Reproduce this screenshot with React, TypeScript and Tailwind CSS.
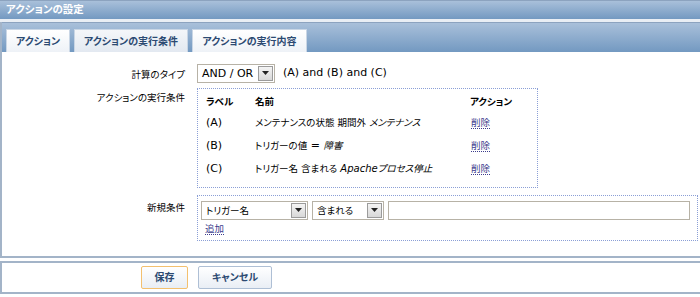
// Action settings form - condition tab of the action editor

const jp = { fontFamily: '"DejaVu Sans", "Noto Sans CJK JP", sans-serif' };

// japanese text is rendered a bit smaller than latin text in this screen
function J({ children, className = '' }: { children: React.ReactNode; className?: string }) {
    return <span className={`text-[9.5px] ${className}`}>{children}</span>;
}

type Cond = { label: string; name: React.ReactNode };

const conditions: Cond[] = [
    { label: '(A)', name: <J>メンテナンスの状態 期間外 <i>メンテナンス</i></J> },
    { label: '(B)', name: <><J>トリガーの値</J> = <J><i>障害</i></J></> },
    { label: '(C)', name: <><J>トリガー名 含まれる </J><i className="text-[10px]">Apache</i><J><i>プロセス停止</i></J></> },
];

function SelectBox({ value, width }: { value: React.ReactNode; width: string }) {
    return (
        <div className={`flex items-center h-[19px] border border-[#b7b2a6] bg-white ${width}`}>
            <span className="flex-1 pl-1 text-[11px] text-black leading-none">{value}</span>
            <span className="w-[15px] h-[15px] mr-[1px] border border-[#9b9b9b] bg-gradient-to-b from-[#f4f4f4] to-[#d8d8d8] flex items-center justify-center">
                <svg width="7" height="4" viewBox="0 0 7 4"><path d="M0 0h7L3.5 4z" fill="#222" /></svg>
            </span>
        </div>
    );
}

function TextLink({ text }: { text: string }) {
    return <span className="text-[9.5px] text-[#3b3b8c] border-b border-dotted border-[#3b3b8c] leading-[13px]">{text}</span>;
}

const tabCls = 'h-[23px] border border-b-0 border-[#c9d6e5] flex items-center justify-center font-bold text-[10px] text-[#2c4a72]';

export default function App() {
    return (
        <div className="w-[700px] h-[297px] bg-white overflow-hidden text-[11px] text-black [font-feature-settings:'palt']" style={jp}>
            {/* title bar */}
            <div className="h-[19px] border-t border-[#8ca3bf] bg-gradient-to-b from-[#a9c0da] to-[#7399c1] flex items-center pl-[6px]">
                <span className="text-white font-bold text-[10.5px]">アクションの設定</span>
            </div>
            <div className="h-[3px] bg-[#e9eef4]" />
            {/* tab panel */}
            <div className="border-l-2 border-[#a3b4c8]">
                <div className="h-[30px] border-t border-[#8ca3bf] bg-gradient-to-b from-[#a9c0da] to-[#7399c1] flex items-end pl-[4px] gap-[4px]">
                    <div className={`${tabCls} w-[64px] bg-gradient-to-b from-white to-[#eef2f7]`}>アクション</div>
                    <div className={`${tabCls} w-[114px] bg-gradient-to-b from-[#f4f6f9] to-[#e3e9f1]`}>アクションの実行条件</div>
                    <div className={`${tabCls} w-[115px] bg-gradient-to-b from-white to-[#eef2f7]`}>アクションの実行内容</div>
                </div>
                <div className="h-[206px] border-b-2 border-[#a3b4c8] pt-[11px]">
                    <div className="grid grid-cols-[187px_1fr] pr-[2px]">
                        <div className="text-right pr-[4px] pt-[4px]"><J>計算のタイプ</J></div>
                        <div className="pl-[8px] flex items-center gap-[8px]">
                            <SelectBox value="AND / OR" width="w-[78px]" />
                            <span>(A) and (B) and (C)</span>
                        </div>

                        <div className="text-right pr-[4px] pt-[6px]"><J>アクションの実行条件</J></div>
                        <div className="pl-[8px] pt-[4px]">
                            <div className="w-[341px] h-[100px] border border-dotted border-[#8b9fd6] pl-[8px] pt-[5px]">
                                <div className="grid grid-cols-[49px_214px_1fr] font-bold h-[18px] items-center">
                                    <J>ラベル</J><J>名前</J><J className="pl-[1px]">アクション</J>
                                </div>
                                {conditions.map(c => (
                                    <div key={c.label} className="grid grid-cols-[49px_216px_1fr] h-[23px] items-center">
                                        <span>{c.label}</span><span>{c.name}</span><span><TextLink text="削除" /></span>
                                    </div>
                                ))}
                            </div>
                        </div>

                        <div className="text-right pr-[4px] pt-[12px]"><J>新規条件</J></div>
                        <div className="pl-[8px] pt-[7px]">
                            <div className="h-[46px] border border-dotted border-[#8b9fd6] pl-[3px] pt-[5px]">
                                <div className="flex gap-[4px]">
                                    <SelectBox value={<J>トリガー名</J>} width="w-[107px]" />
                                    <SelectBox value={<J>含まれる</J>} width="w-[72px]" />
                                    <div className="h-[19px] w-[302px] border border-[#b7b2a6] bg-white" />
                                </div>
                                <div className="pl-[4px] pt-[1px]"><TextLink text="追加" /></div>
                            </div>
                        </div>
                    </div>
                </div>
            </div>
            <div className="h-[3px]" />
            {/* footer */}
            <div className="h-[33px] border-2 border-[#a3b4c8] border-r-0 flex items-center pl-[139px] gap-[10px]">
                <button className="h-[23px] w-[47px] rounded-[2px] border border-[#f3c06f] bg-gradient-to-b from-white to-[#e9eef5] font-bold text-[10px] text-[#2c4a72]">保存</button>
                <button className="h-[23px] w-[74px] rounded-[2px] border border-[#aebfd5] bg-gradient-to-b from-white to-[#e9eef5] font-bold text-[10px] text-[#2c4a72]">キャンセル</button>
            </div>
        </div>
    );
}
